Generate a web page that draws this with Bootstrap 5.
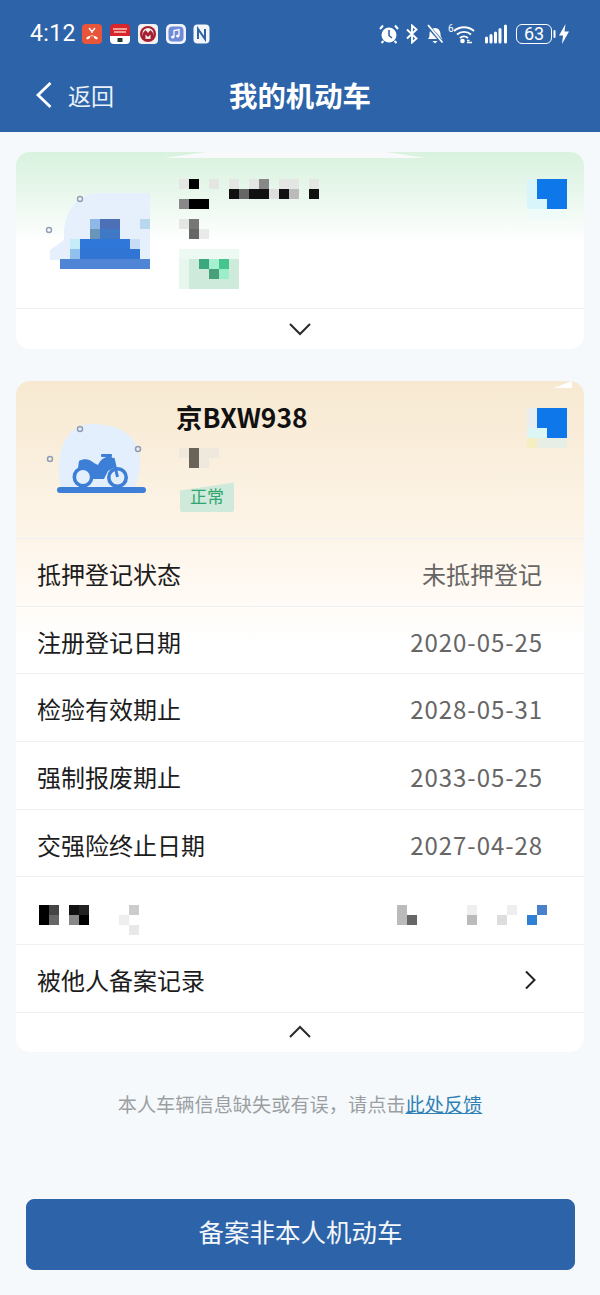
<!DOCTYPE html>
<html lang="zh-CN">
<head>
  <meta charset="UTF-8">
  <meta name="viewport" content="width=device-width, initial-scale=1.0">
  <title>我的机动车</title>
  <link href="https://cdn.jsdelivr.net/npm/bootstrap@5.3.0/dist/css/bootstrap.min.css" rel="stylesheet">
  <style>
    body {
      background-color: #f5f9fb;
      font-family: "Noto Sans CJK SC", "Noto Sans", sans-serif;
      color: #1c1c1c;
      width: 600px;
      height: 1295px;
      overflow: hidden;
    }
    .top-bar {
      background-color: #2d64a9;
      height: 132px;
      color: #fff;
    }
    .status-row {
      height: 68px;
      padding: 0 31px 0 30px;
    }
    .clock {
      font-family: Roboto, sans-serif;
      font-size: 23px;
      width: 52px;
      letter-spacing: .4px;
    }
    .title-row {
      height: 54px;
      padding-left: 35px;
      position: relative;
    }
    .back-label {
      font-size: 23px;
      margin-left: 15px;
      line-height: 1;
      color: #eaf1f9;
    }
    .page-title {
      font-size: 28.4px;
      font-weight: 700;
      line-height: 1;
      width: 100%;
      text-align: center;
      position: absolute;
      left: 0;
    }
    .page-body {
      padding: 20px 16px 0;
    }
    .plate-card {
      background: #fff;
      border-radius: 14px;
      overflow: hidden;
      position: relative;
    }
    .plate-green {
      height: 197px;
      background: linear-gradient(#d9f2df, #e8f7ec 40px, #ffffff 90px);
      margin-bottom: 32px;
    }
    .plate-green::before {
      content: "";
      position: absolute;
      left: 148px;
      top: 0;
      width: 262px;
      height: 6px;
      background: #f8f9fb;
      clip-path: polygon(0 100%, 16% 0, 85% 0, 100% 100%);
    }
    .plate-peach {
      height: 671px;
      background: linear-gradient(#f7e9d1, #fdf5e9 157px, #fffaf4 215px, #ffffff 260px);
    }
    .plate-peach::before {
      content: "";
      position: absolute;
      right: 12px;
      top: 0;
      width: 18px;
      height: 7px;
      background: #fff;
      clip-path: polygon(0 100%, 100% 0, 100% 100%);
    }
    .plate-head {
      height: 156px;
    }
    .plate-peach .plate-head {
      height: 157px;
    }
    .plate-head svg,
    .info-row svg {
      display: block;
      flex: none;
    }
    .plate-no {
      font-size: 26.4px;
      font-weight: 700;
      line-height: 1;
      color: #111;
      margin: 23px 0 18px -3px;
    }
    .state-tag {
      width: 54px;
      height: 30px;
      margin: 14px 0 0 1px;
      padding-bottom: 4px;
      background: #cfeadb;
      color: #2fa56f;
      font-size: 17px;
      line-height: 1;
      border-radius: 0 0 2px 2px;
      clip-path: polygon(0 8px, 100% 0, 100% 100%, 0 100%);
    }
    .info-col {
      width: 348px;
    }
    .info-row {
      height: 67.7px;
      padding: 3px 42px 0 21px;
      border-top: 1px solid #eef1f4;
      font-size: 24px;
      line-height: 1;
    }
    .info-val {
      color: #666;
    }
    .date-val {
      letter-spacing: .95px;
      margin-right: -1px;
    }
    .masked-row svg {
      margin: 6px 0 0 2px;
    }
    .fold-row {
      height: 40px;
      border-top: 1px solid #eef1f4;
    }
    .hint-text {
      font-size: 19.2px;
      color: #9b9fa3;
      line-height: 1;
      margin-top: 43px;
    }
    .hint-text a {
      color: #2f81b5;
    }
    .add-btn {
      display: block;
      width: 549px;
      height: 71px;
      margin: 85px 0 0 10px;
      padding-bottom: 13px;
      background-color: #2d64a9;
      border-color: #2d64a9;
      color: #f4f7fb;
      font-size: 25.5px;
      border-radius: 8px;
    }
  </style>
</head>
<body>

  <!-- Header -->
  <div class="top-bar">
    <div class="status-row d-flex align-items-center">
      <span class="clock">4:12</span>
      <div class="d-flex align-items-center">
        <svg width="20" height="20" viewBox="0 0 20 20"><rect width="20" height="20" rx="4" fill="#e8553a"/><path d="M4 14c3-3.500 9-3.500 12 0l-1.500 1.500-2.500-1.500v-1.500c-1-.3-3-.3-4 0V14l-2.500 1.500z" fill="#fff"/><path d="M7 4l2.500 3M13 4l-2.500 3M10 6v3" stroke="#fff" stroke-width="1.400" fill="none"/></svg>
        <svg class="ms-2" width="20" height="20" viewBox="0 0 20 20"><path d="M0 4a4 4 0 0 1 4-4h12a4 4 0 0 1 4 4v8H0z" fill="#d8262c"/><path d="M0 12h20v4a4 4 0 0 1-4 4H4a4 4 0 0 1-4-4z" fill="#fff"/><path d="M3 5h14M4 8h12" stroke="#f6c7b5" stroke-width="1.500"/><rect x="7.500" y="14" width="5" height="4" fill="#1f3b34"/></svg>
        <svg style="margin-left:8px" width="20" height="20" viewBox="0 0 20 20"><rect width="20" height="20" rx="4" fill="#f6f1f1"/><circle cx="10" cy="10" r="8" fill="#a5202f"/><circle cx="10" cy="9.500" r="5.500" fill="#f6f1f1"/><path d="M5 14V9l2.500-3L10 9l2.500-3L15 9v5h-2.500v-3.500L10 13l-2.500-2.500V14z" fill="#a5202f"/></svg>
        <svg style="margin-left:8px" width="20" height="20" viewBox="0 0 20 20"><rect width="20" height="20" rx="5" fill="#f0f3fb"/><rect x="2.500" y="2.500" width="15" height="15" rx="4" fill="#6e8ad8"/><path d="M8 13V6.500l5-1V12" stroke="#fff" stroke-width="1.300" fill="none"/><circle cx="6.700" cy="13" r="1.600" fill="#fff"/><circle cx="11.700" cy="12" r="1.600" fill="#fff"/></svg>
        <svg style="margin-left:7px" width="17" height="20" viewBox="0 0 17 20"><rect x=".5" y=".5" width="16" height="19" rx="4" fill="#f4f6fa"/><path d="M5 15V5l7 10V5" stroke="#2d64a9" stroke-width="2" fill="none"/></svg>
      </div>
      <div class="d-flex align-items-center ms-auto">
        <svg width="20" height="20" viewBox="0 0 20 20"><circle cx="10" cy="11" r="7.500" fill="#fff"/><path d="M10 6v5.500l3 2.500" stroke="#2d64a9" stroke-width="1.600" fill="none"/><path d="M1 5l3-3.500M19 5l-3-3.500M4.500 17l-2 2M15.500 17l2 2" stroke="#fff" stroke-width="2"/></svg>
        <svg style="margin-left:7px" width="12" height="20" viewBox="0 0 12 20"><path d="M1 5.500l9.500 9L6 18.500V1.500l4.500 4L1 14.500" stroke="#fff" stroke-width="1.900" fill="none"/></svg>
        <svg style="margin-left:8px" width="18" height="20" viewBox="0 0 18 20"><path d="M2 15c1.500-1.500 1.500-3 1.500-5 0-3 2-6 5.500-6s5.500 3 5.500 6c0 2 .5 3.500 2 5z" fill="#fff"/><path d="M6.500 17h5l-2.500 2.500z" fill="#fff"/><path d="M1.500 1.500l15 17" stroke="#2d64a9" stroke-width="3.500"/><path d="M2 1l14.500 17.500" stroke="#fff" stroke-width="1.800"/></svg>
        <div class="position-relative" style="margin-left:4px;width:27px;height:20px">
          <svg class="position-absolute top-0 end-0" width="22" height="20" viewBox="0 0 22 20"><path d="M1 7c5.500-5 14.500-5 20 0M4 10.500c4-3.500 10-3.500 14 0M7 14c2.300-2 5.700-2 8 0" stroke="#fff" stroke-width="1.900" fill="none"/><circle cx="9.500" cy="17" r="2.300" fill="#fff"/><path d="M14 16.500h2.500M14 18.500h5" stroke="#fff" stroke-width="1.300"/></svg>
          <span class="position-absolute top-0 start-0" style="font-family:Roboto,sans-serif;font-size:10px;line-height:1">6</span>
        </div>
        <svg style="margin-left:10px" width="23" height="20" viewBox="0 0 23 20"><path d="M1.500 14v4M6 11.500V18M10.500 9v9M15 5.500V18M20.500 2v16" stroke="#fff" stroke-width="3" stroke-linecap="round" fill="none"/></svg>
        <div class="position-relative d-flex align-items-center justify-content-center" style="margin-left:8px;width:36px;height:20px;border:1.500px solid #fff;border-radius:6px;font-family:Roboto,sans-serif;font-size:18px;line-height:1">63</div>
        <svg style="margin-left:1px" width="3" height="8" viewBox="0 0 3 8"><rect x=".5" width="2" height="8" rx="1" fill="#fff"/></svg>
        <svg style="margin-left:3px" width="10" height="20" viewBox="0 0 10 20"><path d="M6.500 0L0 11.500h4L3 20l7-12.500H5.500z" fill="#fff"/></svg>
      </div>
    </div>
    <div class="title-row d-flex align-items-center">
      <svg width="18" height="28" viewBox="0 0 18 28"><path d="M15.500 2L3 14l12.500 12" stroke="#fff" stroke-width="2.800" fill="none"/></svg>
      <span class="back-label">返回</span>
      <span class="page-title">我的机动车</span>
    </div>
  </div>

  <div class="page-body">

    <!-- Hidden plate card -->
    <div class="plate-card plate-green">
      <div class="plate-head d-flex">
        <svg style="margin-left:24px" width="126" height="120" viewBox="40 152 126 120">
          <path d="M64 240C62 212 78 193 100 193H150V260H50V250z" fill="#e6f0fd"/>
          <circle cx="80" cy="199" r="2.500" fill="none" stroke="#8f9fb5" stroke-width="1.400"/>
          <circle cx="49" cy="230" r="2.500" fill="none" stroke="#8f9fb5" stroke-width="1.400"/>
          <rect x="140" y="219" width="10" height="10" fill="#b8d8f0"/>
          <rect x="90" y="219" width="10" height="10" fill="#8fb8e8"/><rect x="100" y="219" width="20" height="10" fill="#4c6fb5"/>
          <rect x="90" y="229" width="10" height="10" fill="#6a94b8"/><rect x="100" y="229" width="20" height="10" fill="#3f78c4"/>
          <rect x="70" y="239" width="10" height="10" fill="#c5ecf8"/><rect x="80" y="239" width="50" height="10" fill="#2f77d8"/><rect x="130" y="239" width="10" height="10" fill="#c8dcf5"/>
          <rect x="70" y="249" width="10" height="10" fill="#90c0ee"/><rect x="80" y="249" width="60" height="10" fill="#3074d4"/>
          <rect x="60" y="259" width="90" height="10" fill="#4f85d4"/>
        </svg>
        <svg style="margin-left:13px;margin-top:27px" width="140" height="110" viewBox="179 179 140 110">
          <g fill="#e3e6e3"><rect x="179" y="179" width="10" height="10"/><rect x="209" y="179" width="10" height="10"/><rect x="229" y="179" width="10" height="10"/><rect x="249" y="179" width="10" height="10"/><rect x="279" y="179" width="20" height="10"/><rect x="309" y="179" width="10" height="10"/><rect x="179" y="219" width="10" height="10"/></g>
          <rect x="189" y="179" width="10" height="10" fill="#000"/><rect x="259" y="179" width="10" height="10" fill="#888"/>
          <g fill="#111"><rect x="229" y="189" width="10" height="10"/><rect x="249" y="189" width="20" height="10"/><rect x="279" y="189" width="10" height="10"/><rect x="309" y="189" width="10" height="10"/></g>
          <rect x="239" y="189" width="10" height="10" fill="#666"/><rect x="269" y="189" width="10" height="10" fill="#ddd"/><rect x="289" y="189" width="10" height="10" fill="#bbb"/>
          <rect x="179" y="199" width="10" height="10" fill="#888"/><rect x="189" y="199" width="20" height="10" fill="#000"/>
          <rect x="189" y="219" width="10" height="10" fill="#777"/><rect x="189" y="229" width="10" height="10" fill="#666"/><rect x="199" y="229" width="10" height="10" fill="#e8ebe8"/>
          <rect x="179" y="249" width="60" height="10" fill="#edf9f3"/>
          <rect x="179" y="259" width="60" height="30" fill="#cdeadb"/><rect x="179" y="259" width="10" height="30" fill="#e8f7ee"/>
          <rect x="199" y="259" width="10" height="10" fill="#3aa87c"/><rect x="209" y="259" width="10" height="10" fill="#a5f0d0"/><rect x="219" y="259" width="10" height="10" fill="#45c48c"/>
          <rect x="209" y="269" width="10" height="10" fill="#48a07a"/><rect x="219" y="269" width="10" height="10" fill="#9aeeca"/>
        </svg>
        <svg class="ms-auto" style="margin-top:27px;margin-right:17px" width="40" height="40" viewBox="527 179 40 40">
          <rect x="527" y="179" width="10" height="30" fill="#d8f5fb"/><rect x="537" y="199" width="10" height="10" fill="#d8f5fb"/><rect x="527" y="209" width="40" height="10" fill="#eefbf9"/>
          <path d="M537 179h30v30h-20v-10h-10z" fill="#0e78ea"/>
        </svg>
      </div>
      <div class="fold-row d-flex align-items-center justify-content-center">
        <svg width="22" height="14" viewBox="0 0 22 14"><path d="M1 2l10 10L21 2" stroke="#2a2a2a" stroke-width="2" fill="none"/></svg>
      </div>
    </div>

    <!-- Motorcycle card -->
    <div class="plate-card plate-peach">
      <div class="plate-head d-flex">
        <svg style="margin:29px 0 0 14px" width="120" height="90" viewBox="0 0 120 90">
          <path d="M31 78C24 46 34 14 62 14c22 0 47 8 48 36 0 14-3 22-6 28z" fill="#e3effc"/>
          <g fill="none" stroke="#8e9db5" stroke-width="1.500"><circle cx="50" cy="19" r="2.500"/><circle cx="20" cy="49" r="2.500"/><circle cx="108" cy="39" r="2.500"/></g>
          <rect x="27" y="77" width="89" height="6" rx="3" fill="#3d7fd6"/>
          <g fill="none" stroke="#3d7fd6" stroke-width="3.600"><circle cx="53" cy="67" r="8.700"/><circle cx="87.500" cy="67.500" r="8.700"/></g>
          <path d="M83 48l4.500 19" fill="none" stroke="#3d7fd6" stroke-width="3"/>
          <path d="M49 51C54 48 60 49 64 53L68 55C70 50 74 47 80 46L84 49L85 57L78 61L74 69H62L59 61C56 58 53 57 48 58z" fill="#3d7fd6"/>
          <rect x="71" y="44" width="11" height="3" rx="1" fill="#3d7fd6"/>
        </svg>
        <div class="info-col flex-shrink-0" style="margin-left:29px">
          <div class="plate-no">京BXW938</div>
          <svg width="40" height="20" viewBox="179 448 40 20"><rect x="179" y="448" width="40" height="10" fill="#efe8dd"/><rect x="189" y="458" width="20" height="10" fill="#efe8dd"/><rect x="189" y="448" width="10" height="20" fill="#6a635a"/></svg>
          <div class="state-tag d-flex align-items-center justify-content-center">正常</div>
        </div>
        <svg class="ms-auto" style="margin-top:27px;margin-right:17px" width="40" height="50" viewBox="527 408 40 50">
          <rect x="527" y="408" width="10" height="20" fill="#e8eef0"/><rect x="527" y="428" width="20" height="10" fill="#dcf6f6"/><rect x="527" y="438" width="10" height="10" fill="#f5eec0"/><rect x="537" y="438" width="30" height="10" fill="#e6eee6"/>
          <path d="M537 408h30v30h-20v-10h-10z" fill="#0e78ea"/>
        </svg>
      </div>
      <div class="info-row d-flex align-items-center justify-content-between"><span>抵押登记状态</span><span class="info-val">未抵押登记</span></div>
      <div class="info-row d-flex align-items-center justify-content-between"><span>注册登记日期</span><span class="info-val date-val">2020-05-25</span></div>
      <div class="info-row d-flex align-items-center justify-content-between"><span>检验有效期止</span><span class="info-val date-val">2028-05-31</span></div>
      <div class="info-row d-flex align-items-center justify-content-between"><span>强制报废期止</span><span class="info-val date-val">2033-05-25</span></div>
      <div class="info-row d-flex align-items-center justify-content-between"><span>交强险终止日期</span><span class="info-val date-val">2027-04-28</span></div>
      <div class="info-row masked-row d-flex align-items-center pe-0">
        <svg width="520" height="40" viewBox="39 895 520 40">
          <rect x="39" y="905" width="10" height="20" fill="#000"/><rect x="49" y="905" width="10" height="10" fill="#444"/><rect x="49" y="915" width="10" height="10" fill="#666"/>
          <rect x="69" y="905" width="10" height="10" fill="#111"/><rect x="69" y="915" width="10" height="10" fill="#888"/><rect x="79" y="905" width="10" height="10" fill="#222"/><rect x="79" y="915" width="10" height="10" fill="#000"/>
          <rect x="129" y="905" width="10" height="10" fill="#ccc"/><rect x="119" y="915" width="10" height="10" fill="#eee"/><rect x="129" y="925" width="10" height="10" fill="#e8e8e8"/>
          <rect x="397" y="905" width="10" height="20" fill="#bbb"/><rect x="407" y="915" width="10" height="10" fill="#666"/>
          <rect x="467" y="905" width="10" height="10" fill="#eee"/><rect x="467" y="915" width="10" height="10" fill="#bbb"/><rect x="497" y="915" width="10" height="10" fill="#ddd"/><rect x="507" y="905" width="10" height="10" fill="#eee"/>
          <rect x="527" y="915" width="10" height="10" fill="#2f7fd4"/><rect x="537" y="905" width="10" height="10" fill="#4a80cc"/>
        </svg>
      </div>
      <div class="info-row d-flex align-items-center justify-content-between"><span>被他人备案记录</span>
        <svg style="margin-right:6px" width="12" height="20" viewBox="0 0 12 20"><path d="M2 1.500l8.500 8.500L2 18.500" stroke="#222" stroke-width="2" fill="none"/></svg>
      </div>
      <div class="fold-row d-flex align-items-center justify-content-center">
        <svg width="22" height="14" viewBox="0 0 22 14"><path d="M1 12L11 2l10 10" stroke="#2a2a2a" stroke-width="2" fill="none"/></svg>
      </div>
    </div>

    <p class="hint-text text-center mb-0">本人车辆信息缺失或有误，请点击<a href="#">此处反馈</a></p>

    <button type="button" class="btn btn-primary add-btn">备案非本人机动车</button>
  </div>

  <script src="https://cdn.jsdelivr.net/npm/bootstrap@5.3.0/dist/js/bootstrap.bundle.min.js"></script>
</body>
</html>
